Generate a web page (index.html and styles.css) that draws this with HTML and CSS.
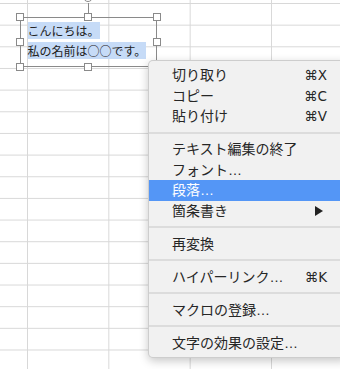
FILE: index.html
```html
<!DOCTYPE html>
<html lang="ja">
<head>
<meta charset="utf-8">
<link rel="stylesheet" href="styles.css">
</head>
<body>
<div class="sheet">
  <div class="textbox">
    <div class="rot-line"></div>
    <div class="rot"></div>
    <span class="handle tl"></span>
    <span class="handle tm"></span>
    <span class="handle tr"></span>
    <span class="handle ml"></span>
    <span class="handle mr"></span>
    <span class="handle bl"></span>
    <span class="handle bm"></span>
    <span class="handle br"></span>
    <div class="content">
      <p class="line"><span class="sel">こんにちは。</span></p>
      <p class="line"><span class="sel">私の名前は○○です。</span></p>
    </div>
  </div>

  <div class="menu">
    <div class="item"><span>切り取り</span><span class="key">⌘X</span></div>
    <div class="item"><span>コピー</span><span class="key">⌘C</span></div>
    <div class="item"><span>貼り付け</span><span class="key">⌘V</span></div>
    <div class="sep"></div>
    <div class="item"><span>テキスト編集の終了</span></div>
    <div class="item"><span>フォント…</span></div>
    <div class="item active"><span>段落…</span></div>
    <div class="item"><span>箇条書き</span><svg class="arrow" width="8" height="10" viewBox="0 0 8 10"><polygon points="0,0 8,5 0,10" fill="#222"/></svg></div>
    <div class="sep"></div>
    <div class="item"><span>再変換</span></div>
    <div class="sep"></div>
    <div class="item"><span>ハイパーリンク…</span><span class="key">⌘K</span></div>
    <div class="sep"></div>
    <div class="item"><span>マクロの登録…</span></div>
    <div class="sep"></div>
    <div class="item"><span>文字の効果の設定…</span></div>
  </div>
</div>
</body>
</html>
```

FILE: styles.css
```css
html, body {
  margin: 0;
  padding: 0;
  background: #ffffff;
}

.sheet {
  position: relative;
  width: 340px;
  height: 369px;
  overflow: hidden;
  background-color: #ffffff;
  background-image:
    linear-gradient(to right, #d8d8d8 1px, transparent 1px),
    linear-gradient(to bottom, #d8d8d8 1px, transparent 1px);
  background-size: 81.33px 100%, 100% 21.67px;
  background-position: 27px 0, 0 3px;
  font-family: "Liberation Sans", "DejaVu Sans", "Noto Sans CJK JP", sans-serif;
}

/* text box */
.textbox {
  position: absolute;
  z-index: 1;
  left: 20px;
  top: 17px;
  width: 137px;
  height: 50px;
  box-sizing: border-box;
  border: 1px solid #8a8a8a;
}

.rot-line {
  position: absolute;
  left: 67px;
  top: -15px;
  width: 1px;
  height: 11px;
  background: #8a8a8a;
}

.rot {
  position: absolute;
  left: 62px;
  top: -26px;
  width: 10px;
  height: 10px;
  box-sizing: border-box;
  border: 1px solid #8a8a8a;
  border-radius: 50%;
  background: #fff;
}

.handle {
  position: absolute;
  width: 8px;
  height: 8px;
  box-sizing: border-box;
  border: 1px solid #8a8a8a;
  background: #fff;
  z-index: 2;
}
.tl { left: -5px; top: -5px; }
.tm { left: 63px; top: -5px; }
.tr { left: 132px; top: -5px; }
.ml { left: -5px; top: 20px; }
.mr { left: 132px; top: 20px; }
.bl { left: -5px; top: 45px; }
.bm { left: 63px; top: 45px; }
.br { left: 132px; top: 45px; }

.content {
  padding: 3px 0 0 6.5px;
  font-family: "Noto Sans CJK JP", sans-serif;
  font-size: 12px;
  color: #222;
}

.line {
  margin: 0;
  line-height: 20px;
  height: 20px;
}

.sel {
  background: #c6dbf7;
}

/* context menu */
.menu {
  position: absolute;
  z-index: 5;
  left: 148px;
  top: 60px;
  width: 200px;
  box-sizing: border-box;
  padding: 4px 0;
  background: #f1f1f1;
  border: 0.5px solid rgba(0, 0, 0, 0.15);
  border-radius: 5px;
  box-shadow: 0 3px 10px rgba(0, 0, 0, 0.22);
  font-size: 14px;
  color: #262626;
}

.item {
  display: flex;
  justify-content: space-between;
  align-items: center;
  height: 20.5px;
  line-height: 20.5px;
  padding: 0 20px 0 23px;
  white-space: nowrap;
}

.item.active {
  background: #5496f6;
  color: #ffffff;
}

.key {
  font-family: "DejaVu Sans", "Liberation Sans", sans-serif;
  font-size: 13.5px;
}

.arrow {
  display: block;
  margin-right: 4px;
}

.sep {
  height: 2px;
  margin: 5.25px 0;
  background: #dcdcdc;
}
```
